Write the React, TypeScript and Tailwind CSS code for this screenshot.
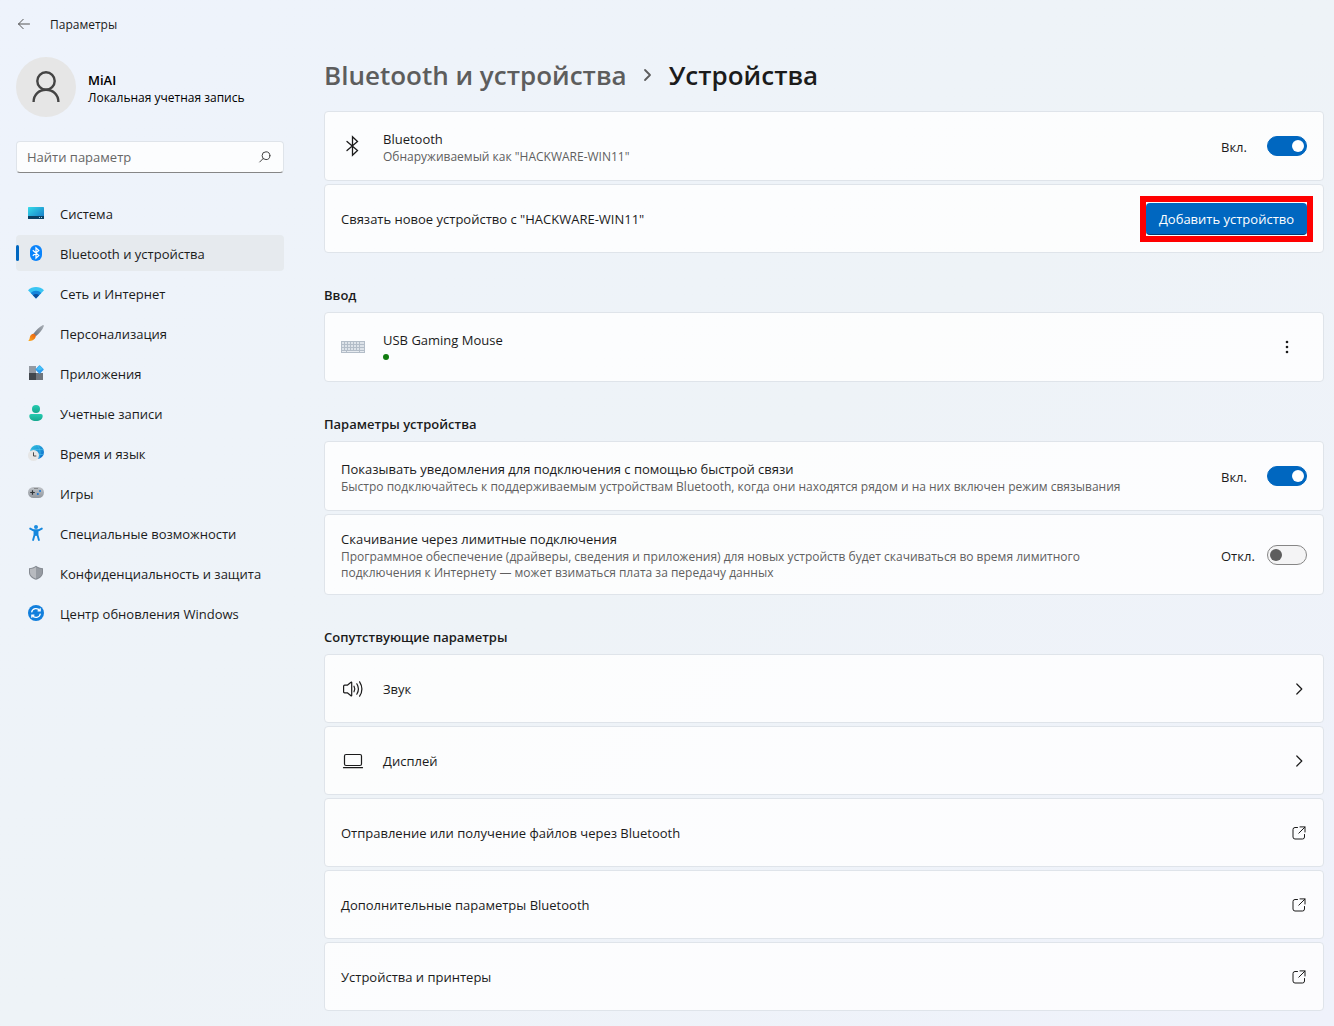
import { useState, type ReactNode } from 'react';

const stroke = { fill: 'none', stroke: 'currentColor', strokeLinecap: 'round', strokeLinejoin: 'round' } as const;

function BackIcon() {
  return (
    <svg width="16" height="16" viewBox="0 0 16 16" {...stroke} aria-hidden="true">
      <path d="M13.500 8H2.500M7.200 3.300L2.500 8l4.700 4.700" />
    </svg>
  );
}

function PersonIcon() {
  return (
    <svg width="28" height="32" viewBox="0 0 28 32" fill="none" stroke="#444" strokeWidth="2.4" aria-hidden="true">
      <circle cx="14" cy="10" r="8.7" />
      <path d="M1.6 31c0-7.4 5.4-12.3 12.4-12.3S26.400 23.600 26.400 31" />
    </svg>
  );
}

function SearchIcon() {
  return (
    <svg width="14" height="14" viewBox="0 0 14 14" {...stroke} aria-hidden="true">
      <circle cx="8" cy="5.700" r="3.900" />
      <path d="M5.200 8.500L1.700 12" />
    </svg>
  );
}

function SystemIcon() {
  return (
    <svg width="16" height="16" viewBox="0 0 16 16" className="shrink-0" aria-hidden="true">
      <defs>
        <linearGradient id="sys" x1="0" y1="0" x2="1" y2="1">
          <stop offset="0" stopColor="#35dcea" />
          <stop offset="1" stopColor="#1473c4" />
        </linearGradient>
      </defs>
      <rect y="2" width="16" height="12" rx=".6" fill="url(#sys)" />
      <path d="M0 11h16v2.400a.6.6 0 0 1-.6.6H.6a.6.6 0 0 1-.6-.6z" fill="#0b4064" />
      <path d="M11 12h1v1h-1zM13 12h1v1h-1z" fill="#9fd6ee" />
    </svg>
  );
}

function BluetoothBadge() {
  return (
    <svg width="16" height="16" viewBox="0 0 16 16" className="shrink-0" aria-hidden="true">
      <rect x="2" width="12" height="16" rx="6" fill="#0a84fb" />
      <path d="M4.800 5.300l6 5.200-2.800 2.700V2.800l2.800 2.700-6 5.200" fill="none" stroke="#fff" strokeWidth="1.200" />
    </svg>
  );
}

function NetworkIcon() {
  return (
    <svg width="16" height="16" viewBox="0 0 16 16" className="shrink-0" aria-hidden="true">
      <path d="M8 13.500L0 5.300a11.300 11.300 0 0 1 16 0z" fill="#39c5f3" />
      <path d="M8 13.500L2.700 8a7.500 7.500 0 0 1 10.600 0z" fill="#1585db" />
      <path d="M8 13.500L4.900 10.300a4.400 4.400 0 0 1 6.200 0z" fill="#0d4f9e" />
    </svg>
  );
}

function BrushIcon() {
  return (
    <svg width="16" height="16" viewBox="0 0 16 16" className="shrink-0" aria-hidden="true">
      <defs>
        <linearGradient id="handle" x1="1" y1="0" x2="0" y2="1">
          <stop offset="0" stopColor="#a9afb7" />
          <stop offset="1" stopColor="#6b727b" />
        </linearGradient>
        <linearGradient id="bristle" x1="1" y1="0" x2="0" y2="1">
          <stop offset="0" stopColor="#e8590c" />
          <stop offset="1" stopColor="#fdb022" />
        </linearGradient>
      </defs>
      <path d="M5.400 8.800C8 5 11.500 1.900 14.600.2c.7-.4 1.500.4 1.200 1.100C14.400 4.800 11.500 8.400 7.800 11.200z" fill="url(#handle)" />
      <path d="M5.400 8.700c1.300.3 2.100 1.200 2.400 2.400-.2 3-3.400 5.500-7.600 4.600 1.800-1 1.300-2.800 2-4.600.6-1.500 1.800-2.300 3.200-2.400z" fill="url(#bristle)" />
    </svg>
  );
}

function AppsIcon() {
  return (
    <svg width="16" height="16" viewBox="0 0 16 16" className="shrink-0" aria-hidden="true">
      <path d="M1 1h7v7H1z" fill="#949aa3" />
      <path d="M1 8h7v7H1z" fill="#41464c" />
      <path d="M8 8h7v7H8z" fill="#6f757d" />
      <rect x="8.500" y="1.400" width="6.200" height="6.200" rx=".7" fill="#2e9df0" transform="rotate(45 11.600 4.500)" />
      <path d="M11.600.5l3.600 3.600-3.700 1.200-3-1.100z" fill="#45c0f6" />
    </svg>
  );
}

function AccountsIcon() {
  return (
    <svg width="16" height="16" viewBox="0 0 16 16" className="shrink-0" aria-hidden="true">
      <defs>
        <linearGradient id="acc" x1="0" y1="0" x2="0" y2="1">
          <stop offset="0" stopColor="#25cbb0" />
          <stop offset="1" stopColor="#16a88f" />
        </linearGradient>
      </defs>
      <circle cx="8" cy="4" r="4" fill="url(#acc)" />
      <path d="M3 9h10a1.700 1.700 0 0 1 1.700 1.700C14.700 14 12 16 8 16s-6.700-2-6.700-5.300A1.700 1.700 0 0 1 3 9z" fill="url(#acc)" />
    </svg>
  );
}

function TimeIcon() {
  return (
    <svg width="16" height="16" viewBox="0 0 16 16" className="shrink-0" aria-hidden="true">
      <defs>
        <linearGradient id="globe" x1="0" y1="0" x2="1" y2="1">
          <stop offset="0" stopColor="#35c6e0" />
          <stop offset="1" stopColor="#0a66cc" />
        </linearGradient>
      </defs>
      <circle cx="9" cy="7" r="7" fill="url(#globe)" />
      <path d="M3 4.500h12.500M9 0c3 3 4 8 2 13M10 9.500h5.500" fill="none" stroke="#4cc4ec" strokeWidth=".6" />
      <circle cx="5.500" cy="10.500" r="5.500" fill="#e6e6e6" />
      <path d="M5.500 7.300v3.700h2.800" fill="none" stroke="#4a4a4a" />
    </svg>
  );
}

function GamesIcon() {
  return (
    <svg width="16" height="16" viewBox="0 0 16 16" className="shrink-0" aria-hidden="true">
      <defs>
        <linearGradient id="pad" x1="0" y1="0" x2="0" y2="1">
          <stop offset="0" stopColor="#c0c4c9" />
          <stop offset="1" stopColor="#92979e" />
        </linearGradient>
      </defs>
      <rect y="2" width="16" height="11" rx="5.500" fill="url(#pad)" />
      <path d="M4.500 5.200v4.600M2.200 7.500h4.600" stroke="#2f3338" strokeWidth="1.200" />
      <path d="M6.500 3.500h1M8.500 3.500h1" stroke="#555" />
      <circle cx="12" cy="6" r="1" fill="#1673d3" />
      <circle cx="9.800" cy="9" r="1" fill="#1673d3" />
    </svg>
  );
}

function AccessibilityIcon() {
  return (
    <svg width="16" height="16" viewBox="0 0 16 16" className="shrink-0" aria-hidden="true">
      <circle cx="8" cy="2" r="2" fill="#1a8ce0" />
      <path d="M2.200 3.600L5.500 5.300h5l3.300-1.700M8 6v4M6.500 6v4l-1.400 5M9.500 6v4l1.400 5" fill="none" stroke="#1487de" strokeWidth="1.900" strokeLinecap="round" strokeLinejoin="round" />
    </svg>
  );
}

function ShieldIcon() {
  return (
    <svg width="16" height="16" viewBox="0 0 16 16" className="shrink-0" aria-hidden="true">
      <path d="M8 .8c2 1.500 4.300 2.200 7 2.400v4.300c0 3.300-2.500 5.700-7 7.300-4.500-1.600-7-4-7-7.300V3.200C3.700 3 6 2.300 8 .8z" fill="#858a91" />
      <path d="M8 2c1.700 1.200 3.700 1.900 6 2.100v3.300c0 2.700-2 4.800-6 6.300z" fill="#969ba2" />
      <path d="M8 2C6.300 3.200 4.300 3.900 2 4.100v3.300c0 2.700 2 4.800 6 6.300z" fill="#b7babf" />
    </svg>
  );
}

function UpdateIcon() {
  return (
    <svg width="16" height="16" viewBox="0 0 16 16" className="shrink-0" aria-hidden="true">
      <circle cx="8" cy="8" r="8" fill="#127fdc" />
      <path d="M3.600 7.300A4.500 4.500 0 0 1 11.800 5.600M12.400 8.700A4.500 4.500 0 0 1 4.200 10.400M12.200 3.300v2.600H9.600M3.800 12.700v-2.600h2.600" fill="none" stroke="#fff" strokeWidth="1.200" />
    </svg>
  );
}

function BluetoothIcon() {
  return (
    <svg width="24" height="24" viewBox="0 0 24 24" {...stroke} strokeWidth="1.300" strokeLinejoin="miter" aria-hidden="true">
      <path d="M6 7.500L16.500 16.500l-5 4.700V2.800l5 4.700L6 16.500" />
    </svg>
  );
}

function KeyboardIcon() {
  const rows = [7, 10, 13];
  const cols = [1, 4, 7, 10, 13, 16, 19];
  return (
    <svg width="24" height="24" viewBox="0 0 24 24" aria-hidden="true">
      <path d="M0 6h24v12H0z" fill="#b3bdc8" />
      {rows.map((y) =>
        cols.map((x) => <rect key={`${x}-${y}`} x={x} y={y} width={x === 19 ? 4 : 2} height="2" fill="#dde3e9" />),
      )}
      <path d="M1 16h4v1H1zM6 16h12v1H6zM19 16h4v1h-4z" fill="#e6ebf0" />
    </svg>
  );
}

function SoundIcon() {
  return (
    <svg width="24" height="24" viewBox="0 0 24 24" {...stroke} strokeWidth="1.200" aria-hidden="true">
      <path d="M2.600 9.200c0-.6.4-1 1-1h2.700l3.700-3c.3-.3.700-.1.7.3v13c0 .4-.4.6-.7.3l-3.700-3H3.600c-.6 0-1-.4-1-1z" />
      <path d="M13 9.200c1 1.700 1 3.900 0 5.600M15.800 6.800c2 3.200 2 7.200 0 10.400M18.600 4.800c2.900 4.500 2.900 9.900 0 14.400" />
    </svg>
  );
}

function DisplayIcon() {
  return (
    <svg width="24" height="24" viewBox="0 0 24 24" {...stroke} strokeWidth="1.200" aria-hidden="true">
      <rect x="3.500" y="5.500" width="17" height="11" rx="1.500" />
      <path d="M2.500 18.700h19" />
    </svg>
  );
}

function ChevronIcon() {
  return (
    <svg width="16" height="16" viewBox="0 0 16 16" {...stroke} strokeWidth="1.200" aria-hidden="true">
      <path d="M5.800 3l5 5-5 5" />
    </svg>
  );
}

function ExternalIcon() {
  return (
    <svg width="16" height="16" viewBox="0 0 16 16" {...stroke} aria-hidden="true">
      <path d="M6.500 2.500H4A2 2 0 0 0 2 4.500v7.500A2 2 0 0 0 4 14h7.500a2 2 0 0 0 2-2V9.500M9 1.900h5V7M14 2L7.800 8.200" />
    </svg>
  );
}

const navItems = [
  { label: 'Система', icon: <SystemIcon /> },
  { label: 'Bluetooth и устройства', icon: <BluetoothBadge />, active: true },
  { label: 'Сеть и Интернет', icon: <NetworkIcon /> },
  { label: 'Персонализация', icon: <BrushIcon /> },
  { label: 'Приложения', icon: <AppsIcon /> },
  { label: 'Учетные записи', icon: <AccountsIcon /> },
  { label: 'Время и язык', icon: <TimeIcon /> },
  { label: 'Игры', icon: <GamesIcon /> },
  { label: 'Специальные возможности', icon: <AccessibilityIcon /> },
  { label: 'Конфиденциальность и защита', icon: <ShieldIcon /> },
  { label: 'Центр обновления Windows', icon: <UpdateIcon /> },
];

const related = [
  { label: 'Звук', icon: <SoundIcon /> },
  { label: 'Дисплей', icon: <DisplayIcon /> },
  { label: 'Отправление или получение файлов через Bluetooth' },
  { label: 'Дополнительные параметры Bluetooth' },
  { label: 'Устройства и принтеры' },
];

const cardSizes = {
  single: 'min-h-[69px]',
  double: 'min-h-[70px]',
  triple: 'min-h-[81px]',
};

function Card({ children, size = 'single' }: { children: ReactNode; size?: keyof typeof cardSizes }) {
  return (
    <div className={`flex items-center rounded border border-[#dfe4ea] bg-white/80 px-4 py-2 ${cardSizes[size]}`}>
      {children}
    </div>
  );
}

function Toggle({ id, initial }: { id: string; initial: boolean }) {
  const [on, setOn] = useState(initial);
  return (
    <div className="ml-auto flex shrink-0 items-center gap-3">
      <span className="w-[34px] whitespace-nowrap pt-0.5">{on ? 'Вкл.' : 'Откл.'}</span>
      <input
        id={id}
        type="checkbox"
        role="switch"
        checked={on}
        onChange={(e) => setOn(e.target.checked)}
        className="flex h-5 w-10 appearance-none items-center rounded-full border border-[#868686] bg-[#f4f4f5] px-0.5 before:size-3 before:rounded-full before:bg-[#5d5d5d] before:content-[''] checked:justify-end checked:border-[#0067c0] checked:bg-[#0067c0] checked:before:bg-white"
      />
    </div>
  );
}

function SectionTitle({ children }: { children: ReactNode }) {
  return <h2 className="mt-8 mb-[7px] font-semibold">{children}</h2>;
}

export default function App() {
  return (
    <div className="flex min-h-screen flex-col bg-linear-to-br from-[#eef3fc] via-[#eef3f7] to-[#eff2fb] font-['Open_Sans',sans-serif] text-[13px] leading-5 text-[#1b1b1b]">
      <header className="flex h-12 items-center gap-[18px] px-4 text-xs">
        <button type="button" aria-label="Назад" className="text-[#555]">
          <BackIcon />
        </button>
        <span className="pt-0.5">Параметры</span>
      </header>

      <div className="flex flex-1">
        <aside className="w-[300px] shrink-0 px-4 pt-[9px]">
          <div className="flex items-center gap-3">
            <div className="flex size-[60px] items-center justify-center rounded-full bg-[#e6e6e6]">
              <PersonIcon />
            </div>
            <div className="pt-0.5">
              <div className="font-semibold text-black">MiAI</div>
              <div className="text-xs leading-4 text-black">Локальная учетная запись</div>
            </div>
          </div>

          <div className="mt-6 flex h-8 items-center rounded border border-b-[#868686] border-[#dfe4ea] bg-white/80 pr-[11px] pl-2.5">
            <input
              type="search"
              aria-label="Найти параметр"
              placeholder="Найти параметр"
              className="min-w-0 flex-1 bg-transparent outline-none placeholder:text-[#666]"
            />
            <button type="button" aria-label="Поиск" className="text-[#444]">
              <SearchIcon />
            </button>
          </div>

          <nav className="mt-[22px] flex flex-col gap-1">
            {navItems.map((item) => (
              <a
                key={item.label}
                href="#"
                aria-current={item.active ? 'page' : undefined}
                className={`relative flex h-9 items-center gap-4 rounded px-3 whitespace-nowrap ${item.active ? 'bg-[#e6eaee]' : ''}`}
              >
                {item.active && <span className="absolute left-0 h-4 w-[3px] rounded-full bg-[#0067c0]" />}
                {item.icon}
                <span className="pt-0.5">{item.label}</span>
              </a>
            ))}
          </nav>
        </aside>

        <main className="min-w-0 flex-1 pt-[9px] pr-2.5 pb-4 pl-6">
          <h1 className="mb-[18px] flex h-9 items-center text-[26px] leading-9 font-semibold whitespace-nowrap">
            <a href="#" className="text-[#5d5d5d]">
              Bluetooth и устройства
            </a>
            <svg width="42" height="16" viewBox="0 0 42 16" {...stroke} stroke="#5d5d5d" strokeWidth="1.800" aria-hidden="true">
              <path d="M18 3l5 5-5 5" />
            </svg>
            <span>Устройства</span>
          </h1>

          <div className="flex flex-col gap-[3px]">
            <Card size="double">
              <div className="mr-[18px]">
                <BluetoothIcon />
              </div>
              <label htmlFor="bluetooth" className="pt-0.5">
                <span className="block">Bluetooth</span>
                <span className="block text-xs leading-4 text-[#5f5f5f]">Обнаруживаемый как "HACKWARE-WIN11"</span>
              </label>
              <Toggle id="bluetooth" initial />
            </Card>
            <Card>
              <span>Связать новое устройство с "HACKWARE-WIN11"</span>
              <div className="-mr-1.5 ml-auto border-6 border-[#ff0000] py-px">
                <button
                  type="button"
                  className="block h-8 min-w-[161px] rounded border-b border-[#003e73] bg-[#0067c0] px-3 pt-px whitespace-nowrap text-white"
                >
                  Добавить устройство
                </button>
              </div>
            </Card>
          </div>

          <SectionTitle>Ввод</SectionTitle>
          <Card size="double">
            <div className="mr-[18px]">
              <KeyboardIcon />
            </div>
            <div>
              <div>USB Gaming Mouse</div>
              <div className="flex h-3.5 items-center">
                <span className="size-1.5 rounded-full bg-[#107c10]" />
              </div>
            </div>
            <button type="button" aria-label="Дополнительно" className="ml-auto flex w-10 justify-center">
              <svg width="16" height="16" viewBox="0 0 16 16" fill="currentColor" aria-hidden="true">
                <circle cx="8" cy="3" r="1.300" />
                <circle cx="8" cy="8" r="1.300" />
                <circle cx="8" cy="13" r="1.300" />
              </svg>
            </button>
          </Card>

          <SectionTitle>Параметры устройства</SectionTitle>
          <div className="flex flex-col gap-[3px]">
            <Card size="double">
              <label htmlFor="quick-pair" className="pt-0.5">
                <span className="block">Показывать уведомления для подключения с помощью быстрой связи</span>
                <span className="block text-xs leading-4 text-[#5f5f5f]">
                  Быстро подключайтесь к поддерживаемым устройствам Bluetooth, когда они находятся рядом и на них включен режим связывания
                </span>
              </label>
              <Toggle id="quick-pair" initial />
            </Card>
            <Card size="triple">
              <label htmlFor="metered" className="max-w-[768px]">
                <span className="block">Скачивание через лимитные подключения</span>
                <span className="block text-xs leading-4 text-[#5f5f5f]">
                  Программное обеспечение (драйверы, сведения и приложения) для новых устройств будет скачиваться во время лимитного
                  подключения к Интернету — может взиматься плата за передачу данных
                </span>
              </label>
              <Toggle id="metered" initial={false} />
            </Card>
          </div>

          <SectionTitle>Сопутствующие параметры</SectionTitle>
          <div className="flex flex-col gap-[3px]">
            {related.map((item) => (
              <a key={item.label} href="#">
                <Card>
                  {item.icon && <span className="mr-[18px]">{item.icon}</span>}
                  <span>{item.label}</span>
                  <span className="ml-auto">{item.icon ? <ChevronIcon /> : <ExternalIcon />}</span>
                </Card>
              </a>
            ))}
          </div>
        </main>
      </div>
    </div>
  );
}
